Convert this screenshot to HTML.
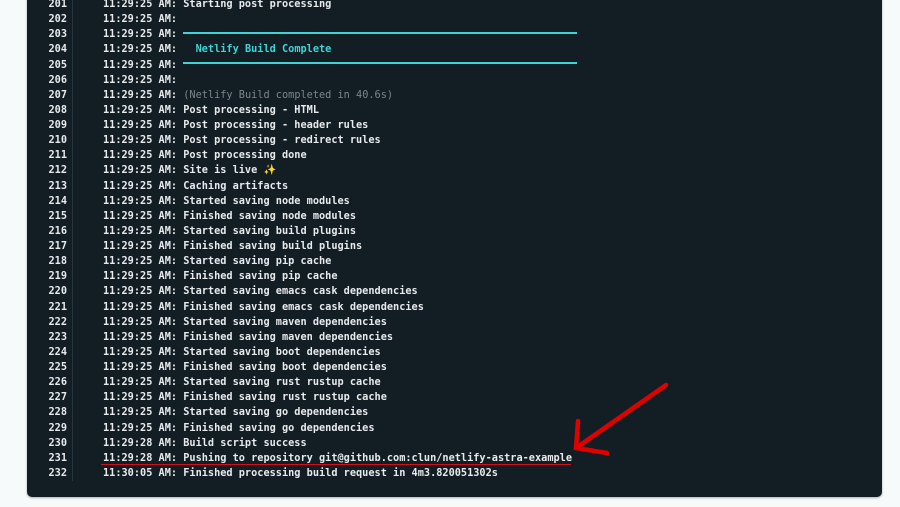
<!DOCTYPE html>
<html><head><style>
html,body{margin:0;width:900px;height:507px;overflow:hidden;}
body{background:#f6fafb;position:relative;font-family:"DejaVu Sans Mono","Liberation Mono",monospace;}
.panel{position:absolute;left:27px;top:-10px;width:855px;height:507px;background:#121d24;border-radius:5px;box-shadow:0 1px 2px rgba(0,0,0,.3);}
.div{position:absolute;left:72px;top:0;width:1px;height:481px;background:#2a363e;}
.rows{position:absolute;left:0;top:-3px;width:900px;font-size:10.25px;line-height:15.13px;color:#e8eaec;font-weight:bold;}
.r{height:15.13px;position:relative;white-space:pre}
.n{position:absolute;left:27px;width:40px;text-align:right}
.t{position:absolute;left:103px}
.c{color:#3fd4d6}
.g{color:#7c858b;font-weight:normal}
.bar{position:absolute;left:183px;width:394px;height:2px;background:#3fd4d6}
.ul{position:absolute;left:101px;top:464px;width:470px;height:1px;background:#d0101a;z-index:5}
</style></head><body>
<div class="panel"></div>
<div class="div"></div>
<div class="bar" style="top:32px"></div>
<div class="bar" style="top:62px"></div>
<div class="rows"><div class="r"><span class="n">201</span><span class="t">11:29:25 AM: Starting post processing</span></div><div class="r"><span class="n">202</span><span class="t">11:29:25 AM:</span></div><div class="r"><span class="n">203</span><span class="t">11:29:25 AM:</span></div><div class="r"><span class="n">204</span><span class="t">11:29:25 AM: <span class="c">  Netlify Build Complete</span></span></div><div class="r"><span class="n">205</span><span class="t">11:29:25 AM:</span></div><div class="r"><span class="n">206</span><span class="t">11:29:25 AM:</span></div><div class="r"><span class="n">207</span><span class="t">11:29:25 AM: <span class="g">(Netlify Build completed in 40.6s)</span></span></div><div class="r"><span class="n">208</span><span class="t">11:29:25 AM: Post processing - HTML</span></div><div class="r"><span class="n">209</span><span class="t">11:29:25 AM: Post processing - header rules</span></div><div class="r"><span class="n">210</span><span class="t">11:29:25 AM: Post processing - redirect rules</span></div><div class="r"><span class="n">211</span><span class="t">11:29:25 AM: Post processing done</span></div><div class="r"><span class="n">212</span><span class="t">11:29:25 AM: Site is live <span style="color:#f5c542">✨</span></span></div><div class="r"><span class="n">213</span><span class="t">11:29:25 AM: Caching artifacts</span></div><div class="r"><span class="n">214</span><span class="t">11:29:25 AM: Started saving node modules</span></div><div class="r"><span class="n">215</span><span class="t">11:29:25 AM: Finished saving node modules</span></div><div class="r"><span class="n">216</span><span class="t">11:29:25 AM: Started saving build plugins</span></div><div class="r"><span class="n">217</span><span class="t">11:29:25 AM: Finished saving build plugins</span></div><div class="r"><span class="n">218</span><span class="t">11:29:25 AM: Started saving pip cache</span></div><div class="r"><span class="n">219</span><span class="t">11:29:25 AM: Finished saving pip cache</span></div><div class="r"><span class="n">220</span><span class="t">11:29:25 AM: Started saving emacs cask dependencies</span></div><div class="r"><span class="n">221</span><span class="t">11:29:25 AM: Finished saving emacs cask dependencies</span></div><div class="r"><span class="n">222</span><span class="t">11:29:25 AM: Started saving maven dependencies</span></div><div class="r"><span class="n">223</span><span class="t">11:29:25 AM: Finished saving maven dependencies</span></div><div class="r"><span class="n">224</span><span class="t">11:29:25 AM: Started saving boot dependencies</span></div><div class="r"><span class="n">225</span><span class="t">11:29:25 AM: Finished saving boot dependencies</span></div><div class="r"><span class="n">226</span><span class="t">11:29:25 AM: Started saving rust rustup cache</span></div><div class="r"><span class="n">227</span><span class="t">11:29:25 AM: Finished saving rust rustup cache</span></div><div class="r"><span class="n">228</span><span class="t">11:29:25 AM: Started saving go dependencies</span></div><div class="r"><span class="n">229</span><span class="t">11:29:25 AM: Finished saving go dependencies</span></div><div class="r"><span class="n">230</span><span class="t">11:29:28 AM: Build script success</span></div><div class="r"><span class="n">231</span><span class="t">11:29:28 AM: Pushing to repository git@github.com:clun/netlify-astra-example</span></div><div class="r"><span class="n">232</span><span class="t">11:30:05 AM: Finished processing build request in 4m3.820051302s</span></div></div>
<div class="ul"></div>
<svg style="position:absolute;left:0;top:0" width="900" height="507"><g stroke="#e00000" stroke-width="4.5" stroke-linecap="round" fill="none"><path d="M666 385 L576 448"/><path d="M578 421 L576 448 L607 453"/></g></svg>
</body></html>
